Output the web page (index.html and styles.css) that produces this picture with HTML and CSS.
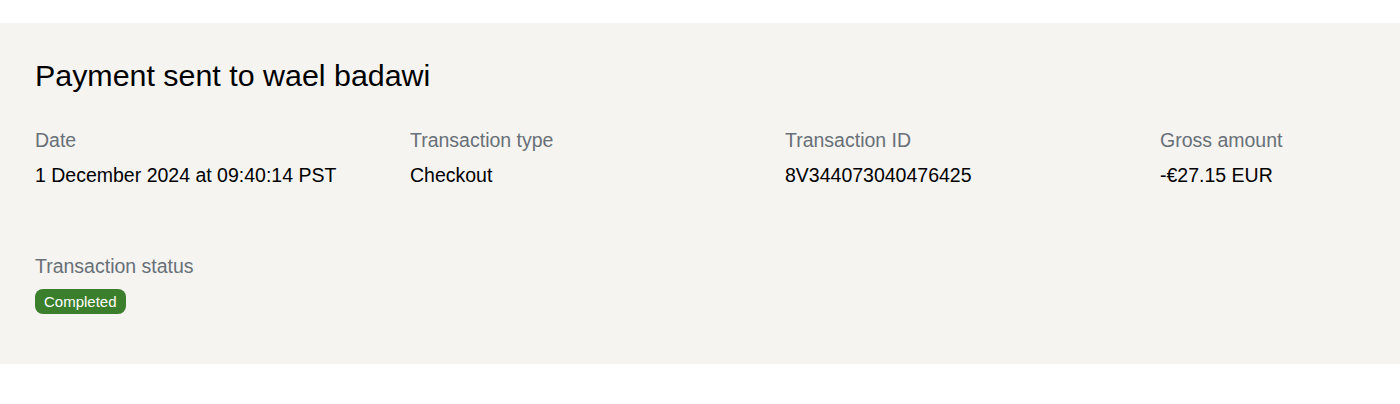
FILE: index.html
```html
<!DOCTYPE html>
<html lang="en">
<head>
<meta charset="utf-8">
<title>Payment details</title>
<link rel="stylesheet" href="styles.css">
</head>
<body>
<section class="panel">
  <h1 class="title">Payment sent to wael badawi</h1>
  <div class="grid">
    <div class="field">
      <div class="label">Date</div>
      <div class="value">1 December 2024 at 09:40:14 PST</div>
    </div>
    <div class="field">
      <div class="label">Transaction type</div>
      <div class="value">Checkout</div>
    </div>
    <div class="field">
      <div class="label">Transaction ID</div>
      <div class="value">8V344073040476425</div>
    </div>
    <div class="field">
      <div class="label">Gross amount</div>
      <div class="value">-€27.15 EUR</div>
    </div>
  </div>
  <div class="status">
    <div class="label">Transaction status</div>
    <span class="badge">Completed</span>
  </div>
</section>
</body>
</html>
```
FILE: styles.css
```css
html, body {
  margin: 0;
  padding: 0;
  background: #ffffff;
}
body {
  font-family: "Liberation Sans", Arial, sans-serif;
  color: #000000;
  padding-top: 23px;
}
.panel {
  background: #f5f4f1;
  height: 341px;
  box-sizing: border-box;
  padding: 34px 35px 0 35px;
}
.title {
  margin: 0;
  font-size: 30.4px;
  font-weight: 400;
  line-height: 36px;
  color: #000;
}
.grid {
  display: grid;
  grid-template-columns: 375px 375px 375px 1fr;
  margin-top: 35px;
}
.label {
  font-size: 19.5px;
  line-height: 24px;
  color: #687078;
}
.value {
  font-size: 19.5px;
  line-height: 24px;
  margin-top: 11px;
  color: #000;
}
.status {
  margin-top: 67px;
}
.badge {
  display: block;
  width: fit-content;
  margin-top: 11px;
  background: #3b7e2c;
  color: #ffffff;
  font-size: 15px;
  line-height: 25px;
  height: 25px;
  padding: 0 9px;
  border-radius: 8px;
}
```
